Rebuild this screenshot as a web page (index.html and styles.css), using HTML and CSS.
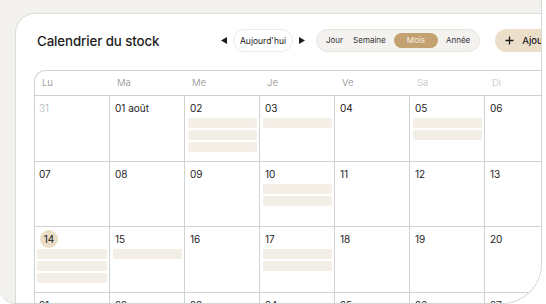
FILE: index.html
```html
<!DOCTYPE html>
<html lang="fr">
<head>
<meta charset="UTF-8">
<meta name="viewport" content="width=device-width, initial-scale=1.0">
<title>Calendrier du stock</title>
<link rel="stylesheet" href="styles.css">
</head>
<body>
    <div class="frame">
        <div class="card">
            <div class="toolbar">
                <h1 class="title">Calendrier du stock</h1>
                <div class="nav">
                    <button class="arrow"><svg width="6" height="7" viewBox="0 0 6 7"><path d="M6 0 L0 3.5 L6 7 Z" fill="#1c1c1c"/></svg></button>
                    <button class="today">Aujourd'hui</button>
                    <button class="arrow"><svg width="6" height="7" viewBox="0 0 6 7"><path d="M0 0 L6 3.5 L0 7 Z" fill="#1c1c1c"/></svg></button>
                </div>
                <div class="views">
                    <span class="view">Jour</span>
                    <span class="view">Semaine</span>
                    <span class="view active">Mois</span>
                    <span class="view">Année</span>
                </div>
                <button class="add"><svg width="9" height="9" viewBox="0 0 9 9"><path d="M4.5 0.5 V8.5 M0.5 4.5 H8.5" stroke="#1c1c1c" stroke-width="1.3"/></svg>Ajouter</button>
            </div>

            <div class="calendar">
                <div class="weekdays">
                    <div class="weekday">Lu</div>
                    <div class="weekday">Ma</div>
                    <div class="weekday">Me</div>
                    <div class="weekday">Je</div>
                    <div class="weekday">Ve</div>
                    <div class="weekday weekend">Sa</div>
                    <div class="weekday weekend">Di</div>
                </div>
                <div class="week">
                    <div class="day other"><div class="date">31</div></div>
                    <div class="day"><div class="date">01 août</div></div>
                    <div class="day"><div class="date">02</div><div class="event"></div><div class="event"></div><div class="event"></div></div>
                    <div class="day"><div class="date">03</div><div class="event"></div></div>
                    <div class="day"><div class="date">04</div></div>
                    <div class="day"><div class="date">05</div><div class="event"></div><div class="event"></div></div>
                    <div class="day"><div class="date">06</div></div>
                </div>
                <div class="week">
                    <div class="day"><div class="date">07</div></div>
                    <div class="day"><div class="date">08</div></div>
                    <div class="day"><div class="date">09</div></div>
                    <div class="day"><div class="date">10</div><div class="event"></div><div class="event"></div></div>
                    <div class="day"><div class="date">11</div></div>
                    <div class="day"><div class="date">12</div></div>
                    <div class="day"><div class="date">13</div></div>
                </div>
                <div class="week">
                    <div class="day"><div class="date"><span class="today-mark">14</span></div><div class="event"></div><div class="event"></div><div class="event"></div></div>
                    <div class="day"><div class="date">15</div><div class="event"></div></div>
                    <div class="day"><div class="date">16</div></div>
                    <div class="day"><div class="date">17</div><div class="event"></div><div class="event"></div></div>
                    <div class="day"><div class="date">18</div></div>
                    <div class="day"><div class="date">19</div></div>
                    <div class="day"><div class="date">20</div></div>
                </div>
                <div class="week">
                    <div class="day"><div class="date">21</div></div>
                    <div class="day"><div class="date">22</div></div>
                    <div class="day"><div class="date">23</div></div>
                    <div class="day"><div class="date">24</div></div>
                    <div class="day"><div class="date">25</div></div>
                    <div class="day"><div class="date">26</div></div>
                    <div class="day"><div class="date">27</div></div>
                </div>
            </div>
        </div>
    </div>
</body>
</html>
```

FILE: styles.css
```css
body {
    margin: 0;
    background: #fff;
    font-family: Inter, "Noto Sans", sans-serif;
    color: #1c1c1c;
}
.frame {
    width: 541px;
    height: 303px;
    background: #f3f1ed;
    border-right: 1px solid #d6d6d6;
    border-bottom: 1px solid #d6d6d6;
    border-radius: 0 0 40px 15px;
    overflow: hidden;
}
.card {
    width: 620px;
    height: 320px;
    margin: 13px 0 0 15px;
    background: #fff;
    border: 1px solid #dadada;
    border-top-left-radius: 20px;
    padding: 15px 0 0 18px;
}
.toolbar {
    display: flex;
    align-items: center;
    height: 23px;
}
.title {
    width: 186px;
    margin: 0;
    padding-left: 3px;
    box-sizing: border-box;
    font-size: 13.3px;
    font-weight: 500;
    letter-spacing: -0.1px;
}
.nav {
    display: flex;
    align-items: center;
    gap: 5px;
}
button {
    font-family: inherit;
    color: inherit;
    border: none;
    background: none;
    padding: 0;
    cursor: pointer;
}
.arrow {
    display: flex;
    width: 8px;
    justify-content: center;
}
.today {
    height: 23px;
    padding: 0 6px;
    border: 1px solid #ececec;
    border-radius: 12px;
    font-size: 8.5px;
}
.views {
    display: flex;
    align-items: center;
    margin-left: 10px;
    padding: 3px 4px;
    background: #f4f2ee;
    border: 1px solid #e7e4de;
    border-radius: 12px;
}
.view {
    padding: 0 5px;
    line-height: 15px;
    font-size: 8px;
    color: #333;
}
.view.active {
    margin: 0 3px;
    padding: 0 13px;
    background: #c3a170;
    color: #f8efe2;
    border-radius: 8px;
}
.add {
    display: flex;
    align-items: center;
    gap: 8px;
    height: 23px;
    margin-left: 15px;
    padding: 0 10px;
    background: #ecdfca;
    border-radius: 12px;
    font-size: 9.5px;
    font-weight: 500;
}
.calendar {
    width: 525px;
    margin-top: 18px;
    border-top: 1px solid #d2d2d2;
    border-left: 1px solid #d2d2d2;
    border-top-left-radius: 12px;
}
.weekdays {
    display: grid;
    grid-template-columns: repeat(7, 75px);
    height: 24px;
    border-bottom: 1px solid #d2d2d2;
}
.weekday {
    padding-left: 7px;
    line-height: 24px;
    font-size: 9.5px;
    font-weight: 300;
    color: #8a8a8a;
}
.weekday.weekend {
    color: #bdbdbd;
}
.week {
    display: grid;
    grid-template-columns: repeat(7, 75px);
}
.day {
    height: 65.5px;
    padding: 4px 2px 0 3px;
    box-sizing: border-box;
    border-right: 1px solid #d2d2d2;
    border-bottom: 1px solid #d2d2d2;
}
.day:first-child {
    padding-left: 2px;
}
.date {
    height: 17px;
    margin-bottom: 1px;
    padding-left: 2px;
    line-height: 17px;
    font-size: 10px;
    color: #1c1c1c;
}
.day.other .date {
    color: #b3b3b3;
    font-weight: 300;
}
.today-mark {
    display: inline-block;
    width: 18px;
    height: 18px;
    margin: -1px 0 0 1px;
    border-radius: 50%;
    background: #ebdec7;
    line-height: 18px;
    text-align: center;
}
.event {
    height: 10px;
    margin-bottom: 2px;
    background: #f3eee6;
    border-radius: 2px;
}
```
